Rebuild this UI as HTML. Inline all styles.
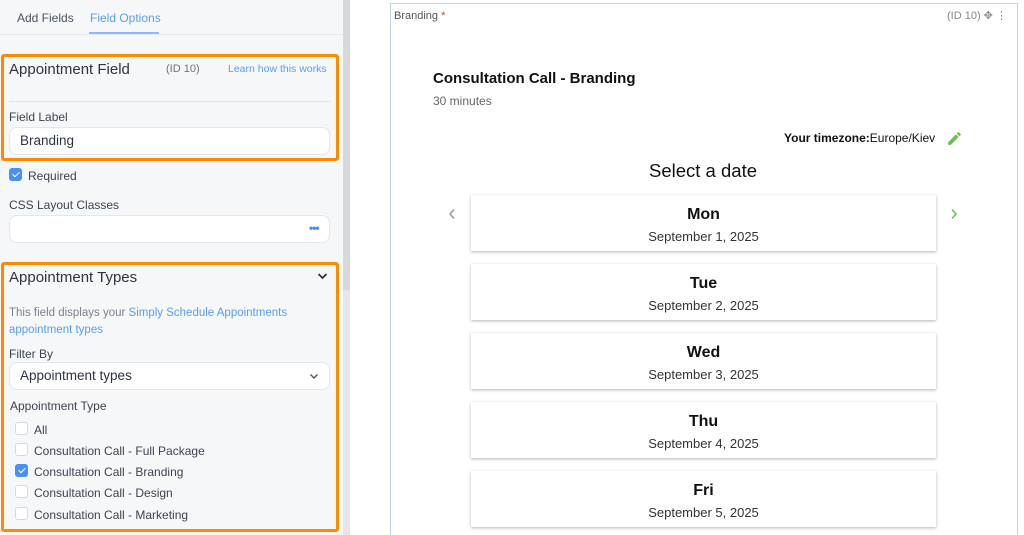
<!DOCTYPE html>
<html style="overflow:hidden"><head><style>
*{box-sizing:border-box;margin:0;padding:0}
html,body{width:1024px;height:535px;overflow:hidden}
body{background:#fff;font-family:"Liberation Sans",sans-serif;position:relative}
.left{position:absolute;left:0;top:0;width:343px;height:535px;background:#f6f7f9}
.sb{position:absolute;left:343px;top:0;width:7px;height:535px;background:#e4e6ea}
.sbt{position:absolute;left:343px;top:0;width:7px;height:290px;background:#d6d8dc}
.a{position:absolute;white-space:nowrap}
.ob{position:absolute;border:3px solid #ff8a00;border-radius:3px}
.inp{position:absolute;background:#fff;border:1px solid #e3e6ea;border-radius:8px}
.cb{position:absolute;width:13px;height:13px;border:1px solid #d5d9de;border-radius:3px;background:#fff}
.cb.on{background:#4a8ff5;border-color:#4a8ff5}
.cb.on:after{content:"";position:absolute;left:3.5px;top:1px;width:3px;height:6px;border:solid #fff;border-width:0 1.5px 1.5px 0;transform:rotate(45deg)}
.lbl{font-size:12px;color:#3b4350}
.card{position:absolute;left:471px;width:465px;height:56px;background:#fff;box-shadow:0 1px 3px rgba(0,0,0,.3);text-align:center}
.card b{display:block;font-size:16px;color:#111;margin-top:11px;font-weight:bold}
.card span{display:block;font-size:13px;color:#333;margin-top:5px}
</style></head><body>
<div class="left"></div><div class="sb"></div><div class="sbt"></div>
<div class="a" style="left:17px;top:11px;font-size:12px;color:#4a5260">Add Fields</div>
<div class="a" style="left:90px;top:11px;font-size:12px;color:#5a9cf0">Field Options</div>
<div class="a" style="left:89px;top:32px;width:70px;height:2px;background:#8fb9f5"></div>
<div class="a" style="left:0;top:34px;width:343px;height:1px;background:#e6e8eb"></div>

<div class="ob" style="left:1px;top:54px;width:338px;height:107px"></div>
<div class="a" style="left:9px;top:61px;font-size:15px;color:#2d3340">Appointment Field</div>
<div class="a" style="left:166px;top:63px;font-size:11px;color:#6a7280">(ID 10)</div>
<div class="a" style="left:228px;top:63px;font-size:10.5px;color:#5a9cf0">Learn how this works</div>
<div class="a" style="left:9px;top:101px;width:321px;height:1px;background:#e1e4e8"></div>
<div class="a lbl" style="left:9px;top:110px">Field Label</div>
<div class="inp" style="left:9px;top:127px;width:321px;height:28px"></div>
<div class="a" style="left:20px;top:133px;font-size:13.5px;color:#2d3340">Branding</div>

<div class="cb on" style="left:9px;top:168px"></div>
<div class="a lbl" style="left:28px;top:169px">Required</div>
<div class="a lbl" style="left:9px;top:198px">CSS Layout Classes</div>
<div class="inp" style="left:9px;top:215px;width:321px;height:28px"></div>
<div class="a" style="left:309px;top:221px;font-size:12px;color:#4a8ff5;font-weight:bold;letter-spacing:-1px">•••</div>

<div class="ob" style="left:1px;top:262px;width:338px;height:270px"></div>
<div class="a" style="left:9px;top:269px;font-size:15px;color:#2d3340">Appointment Types</div>
<svg class="a" style="left:317px;top:272px" width="11" height="8" viewBox="0 0 11 8"><path d="M1.5 2l4 4 4-4" fill="none" stroke="#2d3340" stroke-width="1.8"/></svg>
<div class="a" style="left:9px;top:307px;font-size:11.5px;color:#7a828e">This field displays your <span style="color:#5a9cf0">Simply Schedule Appointments</span></div>
<div class="a" style="left:9px;top:324px;font-size:11.5px;color:#5a9cf0">appointment types</div>
<div class="a lbl" style="left:9px;top:347px">Filter By</div>
<div class="inp" style="left:9px;top:362px;width:321px;height:28px"></div>
<div class="a" style="left:20px;top:368px;font-size:13.5px;color:#2d3340">Appointment types</div>
<svg class="a" style="left:309px;top:373px" width="10" height="7" viewBox="0 0 10 7"><path d="M1.5 1.5l3.5 3.5 3.5-3.5" fill="none" stroke="#4a5260" stroke-width="1.3"/></svg>
<div class="a lbl" style="left:10px;top:399px">Appointment Type</div>
<div class="cb" style="left:15px;top:422px"></div><div class="a lbl" style="left:34px;top:423px">All</div>
<div class="cb" style="left:15px;top:443px"></div><div class="a lbl" style="left:34px;top:444px">Consultation Call - Full Package</div>
<div class="cb on" style="left:15px;top:464px"></div><div class="a lbl" style="left:34px;top:465px">Consultation Call - Branding</div>
<div class="cb" style="left:15px;top:485px"></div><div class="a lbl" style="left:34px;top:486px">Consultation Call - Design</div>
<div class="cb" style="left:15px;top:507px"></div><div class="a lbl" style="left:34px;top:508px">Consultation Call - Marketing</div>

<div class="a" style="left:390px;top:3px;width:628px;height:540px;border:1px solid #b9d3f2"></div>
<div class="a" style="left:394px;top:10px;font-size:11px;color:#555">Branding <span style="color:#e03c3c">*</span></div>
<div class="a" style="left:947px;top:9px;font-size:11px;color:#888">(ID 10) ✥ ⋮</div>
<div class="a" style="left:433px;top:70px;font-size:15px;font-weight:bold;color:#111">Consultation Call - Branding</div>
<div class="a" style="left:433px;top:94px;font-size:12px;color:#666">30 minutes</div>
<div class="a" style="left:784px;top:131px;font-size:12px;color:#111"><b>Your timezone:</b>Europe/Kiev</div>
<svg class="a" style="left:946px;top:130px" width="17" height="17" viewBox="0 0 24 24"><path d="M3 17.25V21h3.75L17.8 9.94l-3.75-3.75L3 17.25zM20.7 7.04a1 1 0 000-1.41l-2.34-2.34a1 1 0 00-1.41 0l-1.83 1.83 3.75 3.75 1.83-1.83z" fill="#6cc04a"/></svg>
<div class="a" style="left:649px;top:160px;font-size:18.5px;color:#111">Select a date</div>
<svg class="a" style="left:448px;top:208px" width="8" height="12" viewBox="0 0 8 12"><path d="M6 1.5L2 6l4 4.5" fill="none" stroke="#999" stroke-width="1.5"/></svg>
<svg class="a" style="left:950px;top:208px" width="8" height="12" viewBox="0 0 8 12"><path d="M2 1.5L6 6l-4 4.5" fill="none" stroke="#6cc04a" stroke-width="1.5"/></svg>
<div class="card" style="top:195px"><b>Mon</b><span>September 1, 2025</span></div>
<div class="card" style="top:264px"><b>Tue</b><span>September 2, 2025</span></div>
<div class="card" style="top:333px"><b>Wed</b><span>September 3, 2025</span></div>
<div class="card" style="top:402px"><b>Thu</b><span>September 4, 2025</span></div>
<div class="card" style="top:471px"><b>Fri</b><span>September 5, 2025</span></div>
</body></html>
